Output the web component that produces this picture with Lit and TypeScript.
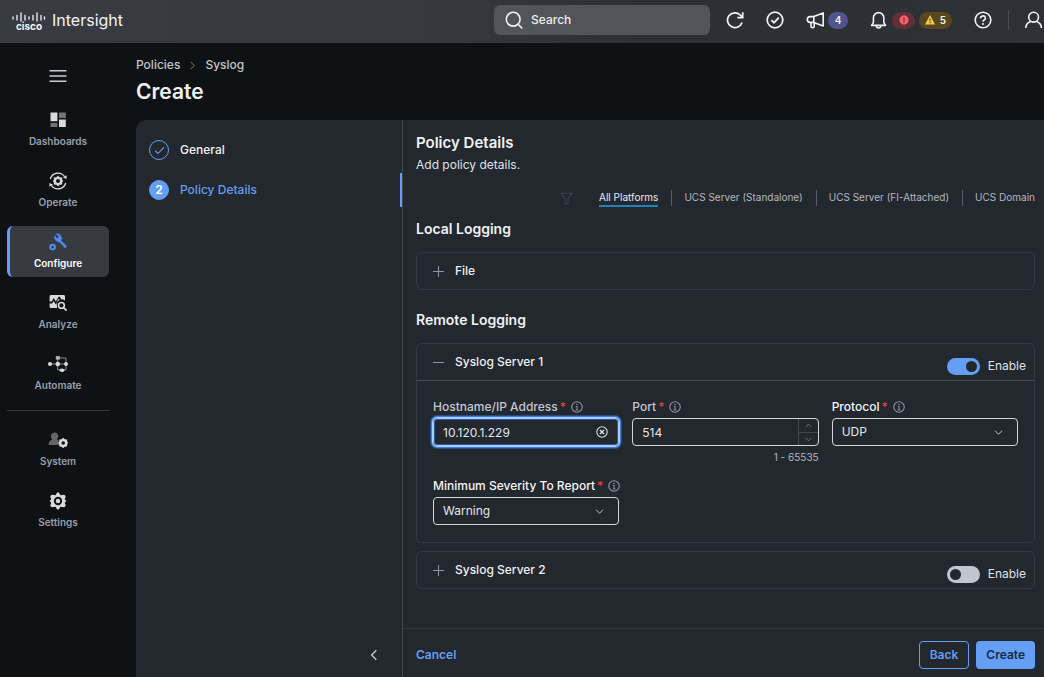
import { LitElement, html, svg, css, nothing } from "lit";
import { customElement, property, state } from "lit/decorators.js";
import { classMap } from "lit/directives/class-map.js";

const hexGear = svg`<path fill-rule="evenodd" d="M8 0Q8.6 0 8.9 .6L10.2 2.8 13.6 2.4Q14.8 2.8 15 4.1L14.1 6.4 15.6 8 14.1 9.6 15 11.9Q14.8 13.2 13.6 13.6L10.2 13.2 8.9 15.4Q8 16.2 7.1 15.4L5.8 13.2 2.4 13.6Q1.2 13.2 1 11.9L1.9 9.6 .4 8 1.9 6.4 1 4.1Q1.2 2.8 2.4 2.4L5.8 2.8 7.1 .6Q7.4 0 8 0ZM8 4.2A3.8 3.8 0 1 0 8 11.8 3.8 3.8 0 1 0 8 4.2Z"/><circle cx="8" cy="8" r="2"/>`;

const icons: Record<string, unknown> = {
  menu: svg`<path d="M.5 3.8h17M.5 9h17M.5 14.2h17" stroke="currentColor" stroke-width="1.5"/>`,
  search: svg`<g fill="none" stroke="currentColor" stroke-width="1.6" stroke-linecap="round"><circle cx="8.2" cy="8.2" r="6.9"/><path d="m13.2 13.2 3.6 3.8"/></g>`,
  refresh: svg`<g fill="none" stroke="currentColor" stroke-width="1.7"><path d="M16 11.4A7.4 7.4 0 1 1 14.2 4L16.3 6.2"/><path d="M16.7 1.2V6.6H11.4"/></g>`,
  check: svg`<g fill="none" stroke="currentColor" stroke-width="1.7"><circle cx="9" cy="9" r="7.8"/><path d="m5.4 9.2 2.6 2.5 4.8-5.1"/></g>`,
  megaphone: svg`<g fill="none" stroke="currentColor" stroke-width="1.6" stroke-linejoin="round"><path d="M7.8 5.6 17.2 1.9V14.9L7.8 11.4H4.2A2.9 2.9 0 0 1 4.2 5.6H7.8V11.4"/><path d="M5 11.6V15.2A1.6 1.6 0 0 0 8.2 15.2V11.8"/></g>`,
  bell: svg`<g fill="none" stroke="currentColor" stroke-width="1.6" stroke-linejoin="round"><path d="M3.4 11.6V6.8A5.2 5.2 0 0 1 13.8 6.8V11.6L15.6 14.4H1.6Z"/><path d="M6.4 14.8A2.2 2.2 0 0 0 10.8 14.8"/></g>`,
  alert: svg`<path fill-rule="evenodd" d="M6.2 1H11.8L17 5.6V12.4L11.8 17H6.2L1 12.4V5.6ZM7.9 4.4V10.2H10.1V4.4ZM7.9 11.6V13.8H10.1V11.6Z" fill="currentColor"/>`,
  warning: svg`<path fill-rule="evenodd" d="M9 0 18 17H0ZM8 6.4V11.4H10V6.4ZM8 12.8V14.8H10V12.8Z" fill="currentColor"/>`,
  help: svg`<g fill="none" stroke="currentColor" stroke-width="1.6"><circle cx="9" cy="9" r="7.8"/><path d="M6.6 7.4A2.4 2.2 0 1 1 9.8 9.2Q9 9.6 9 10.8"/></g><circle cx="9" cy="13" r="1" fill="currentColor"/>`,
  user: svg`<g fill="none" stroke="currentColor" stroke-width="1.6"><circle cx="8.6" cy="6.2" r="4.9"/><path d="M.8 17A8 7 0 0 1 5.6 10.6M16.4 17A8 7 0 0 0 11.6 10.6"/></g>`,
  dashboards: svg`<path d="M1.5 1.6H8.4V10.2H1.5ZM10 8.4H16.8V16H10Z" fill="currentColor"/><path d="M10 1.6H16.8V7H10ZM1.5 12H8.4V16H1.5Z" fill="currentColor" opacity=".5"/>`,
  operate: svg`<g fill="none" stroke="currentColor" stroke-width="1.3"><path d="M1.3 7A8 8 0 0 1 15.6 4.6M16.7 11A8 8 0 0 1 2.4 13.4"/></g><path d="M14 5.6 17.6 3.2 17.6 7ZM4 12.4.4 14.8.4 11Z" fill="currentColor"/><path fill-rule="evenodd" d="M9 3.6 10.6 5.2 13.2 5.4V8L14.4 9 13.2 10V12.6L10.6 12.8 9 14.4 7.4 12.8 4.8 12.6V10L3.6 9 4.8 8V5.4L7.4 5.2ZM9 7A2 2 0 1 0 9 11 2 2 0 1 0 9 7Z" fill="currentColor"/>`,
  configure: svg`<circle cx="3.6" cy="14.1" r="2.3" fill="none" stroke="currentColor" stroke-width="2"/><path d="M7.6 .8 10 3.6 9.2 5.6 7 5.2 5.8 3A4.6 4.6 0 0 0 10.4 8.8L16.2 14.8 17.6 13.4 11.8 7.6A4.6 4.6 0 0 0 7.6 .8Z" fill="currentColor" stroke="currentColor" stroke-width=".9" stroke-linejoin="round"/>`,
  analyze: svg`<path d="M2 1H14.6Q16 1 16 2.4V6.6A5 5 0 0 0 8 12V14H2Q.6 14 .6 12.4V9.4H3.2L4.6 7 6.8 10.6 9.4 4.6 10.6 6.2 12 5 11 2.8H9.6L6.8 7.6 4.8 4 2.6 7.4H.6V2.4Q.6 1 2 1Z" fill="currentColor"/><circle cx="12.4" cy="11.4" r="2.9" fill="none" stroke="currentColor" stroke-width="1.6"/><path d="m14.6 13.6 3 3" stroke="currentColor" stroke-width="1.7"/>`,
  automate: svg`<g fill="none" stroke="currentColor" stroke-width="1" opacity=".6"><path d="M1 9H18M9.6 3V14.8H18V3H9.6"/></g><g fill="currentColor"><circle cx="2" cy="9" r="2"/><circle cx="9.8" cy="9" r="2.3"/><circle cx="18" cy="9" r="2"/><ellipse cx="14" cy="15.2" rx="2.4" ry="1.8"/></g><rect x="7.8" y="1" width="4" height="3.6" fill="currentColor" opacity=".75"/>`,
  system: svg`<path d="M6.6 1.6A3.6 3.6 0 0 1 9 8Q9.2 9 10.6 9.6V14H.6V12.4Q1 9.8 3.2 9.2 4.2 8.8 4 7.8A3.6 3.6 0 0 1 6.6 1.6Z" fill="currentColor" opacity=".42"/><path fill-rule="evenodd" d="M15.2 6.8 16.8 8.2 19 8.6 19.2 10.6 20 12 19.2 13.4 19 15.4 16.8 15.8 15.2 17.2 13.6 15.8 11.4 15.4 11.2 13.4 10.2 12 11.2 10.6 11.4 8.6 13.6 8.2ZM15.2 10.2A1.8 1.8 0 1 0 15.2 13.8 1.8 1.8 0 1 0 15.2 10.2Z" fill="currentColor"/>`,
  settings: svg`<g transform="translate(.2 .2) scale(1.1)" fill="currentColor">${hexGear}</g>`,
  tick: svg`<path d="m3 9.4 4 3.8L15 4.8" fill="none" stroke="currentColor" stroke-width="1.6"/>`,
  filter: svg`<path d="M1.2 1.6H16.8L11 9V16.4H7V9Z" fill="none" stroke="currentColor" stroke-width="1.4" stroke-linejoin="round"/>`,
  plus: svg`<path d="M0 9H18M9 0V18" stroke="currentColor" stroke-width="1.7"/>`,
  minus: svg`<path d="M0 9H18" stroke="currentColor" stroke-width="1.7"/>`,
  info: svg`<circle cx="9" cy="9" r="7.9" fill="none" stroke="currentColor" stroke-width="1.6"/><path d="M9.1 8V13.4M7 13.4H11.2M7.2 8.2H9.6" fill="none" stroke="currentColor" stroke-width="1.4"/><circle cx="9" cy="5.2" r="1.1" fill="currentColor"/>`,
  clear: svg`<g fill="none" stroke="currentColor" stroke-width="1.6"><circle cx="9" cy="9" r="7.8"/><path d="m6 6 6 6M12 6l-6 6" stroke-width="2"/></g>`,
  down: svg`<path d="m2 5.5 7 7 7-7" fill="none" stroke="currentColor" stroke-width="2"/>`,
  up: svg`<path d="m2 12.5 7-7 7 7" fill="none" stroke="currentColor" stroke-width="2"/>`,
  left: svg`<path d="m12.5 2-7 7 7 7" fill="none" stroke="currentColor" stroke-width="2"/>`,
  right: svg`<path d="m5.5 2 7 7-7 7" fill="none" stroke="currentColor" stroke-width="2"/>`,
};

const icon = (name: string, size = 18, extra = "") => {
  const wide = name === "automate" || name === "system";
  return html`<svg class="icon ${extra}" width=${wide ? size + 2 : size} height=${size}
    viewBox=${wide ? "0 0 20 18" : "0 0 18 18"} aria-hidden="true">${icons[name]}</svg>`;
};

const base = css`
  * { box-sizing: border-box; }
  .icon { display: block; flex: none; }
  button, input, select { font: inherit; color: inherit; margin: 0; padding: 0; border: 0; background: none; }
  button, select { cursor: pointer; }
  a { color: inherit; text-decoration: none; }
`;

@customElement("top-bar")
class TopBar extends LitElement {
  static styles = [base, css`
    :host { display: block; }
    .bar { display: flex; align-items: center; justify-content: space-between; height: 43px; padding: 0 1px 3px 12px;
      background: linear-gradient(90deg, #383b42, #36393f 40%, #2c3035 62%, #2d3035); color: #f2f4f7; }
    .brand { display: flex; align-items: center; gap: 6px; }
    .mark { display: flex; flex-direction: column; align-items: center; }
    .word { font-size: 10px; line-height: 8px; font-weight: 700; }
    .product { font-size: 16px; line-height: 20px; }
    .tools { display: flex; align-items: center; gap: 16px; }
    .search { display: flex; align-items: center; gap: 8px; width: 216px; height: 30px; padding: 0 11px; border-radius: 6px; background: #515459; }
    .search input { flex: 1; min-width: 0; font-size: 12px; font-weight: 500; outline: 0; }
    .search input::placeholder { color: #eceef1; opacity: 1; }
    .actions { display: flex; align-items: center; gap: 22px; }
    .action { display: flex; align-items: center; gap: 4px; }
    .pill { display: flex; align-items: center; justify-content: center; gap: 5px; height: 17px; border-radius: 9px; font-size: 10px; font-weight: 600; }
    .news { width: 20px; background: #51568a; }
    .critical { width: 23px; background: #612f38; color: #ff5c6c; }
    .warn { width: 33px; background: #59481f; }
    .warn .amber { color: #f5c84c; }
    .rule { width: 1px; height: 20px; background: #484c52; }
  `];
  render() {
    const bars = [[1, 6, 2], [5, 4.5, 4.5], [9, 2, 8], [13, 4.5, 4.5], [17, 6, 2], [21, 4.5, 4.5], [25, 2, 8], [29, 4.5, 4.5], [32.5, 6, 2]];
    return html`<header class="bar">
      <a class="brand" href="#">
        <span class="mark">
          <svg width="34" height="11" viewBox="0 0 34 11" aria-hidden="true">
            ${bars.map(([x, y, h]) => svg`<path d="M${x} ${y}v${h}" stroke="currentColor" stroke-width="1.3" stroke-linecap="round"/>`)}
          </svg>
          <span class="word">cisco</span>
        </span>
        <span class="product">Intersight</span>
      </a>
      <div class="tools">
        <label class="search">${icon("search")}<input type="text" placeholder="Search" aria-label="Search" /></label>
        <div class="actions">
          <button class="action" aria-label="Refresh">${icon("refresh")}</button>
          <button class="action" aria-label="Requests">${icon("check")}</button>
          <button class="action" aria-label="Announcements">${icon("megaphone")}<span class="pill news">4</span></button>
          <button class="action" aria-label="Alarms">${icon("bell")}
            <span class="pill critical">${icon("alert", 10)}</span>
            <span class="pill warn">${icon("warning", 10, "amber")}5</span></button>
          <button class="action" aria-label="Help">${icon("help")}</button>
        </div>
        <span class="rule"></span>
        <button class="action" aria-label="Account">${icon("user")}</button>
      </div>
    </header>`;
  }
}

@customElement("side-nav")
class SideNav extends LitElement {
  static styles = [base, css`
    :host { display: block; }
    .nav { display: flex; flex-direction: column; gap: 10px; padding: 24px 7px 0; }
    .menu { display: flex; justify-content: center; height: 27px; color: #c9ccd2; }
    .item { display: flex; flex-direction: column; align-items: center; gap: 6px; height: 51px; padding-top: 7px;
      border-radius: 6px; font-size: 10px; line-height: 12px; font-weight: 600; color: #989eaa; }
    .item .icon { color: #d8dade; }
    .active { background: #373a40; color: #fff; border-left: 3px solid #649ef5; padding-right: 3px; }
    .active .icon { color: #4f8df0; }
    .rule { height: 1px; margin: 1px 0 3px; background: #34373c; }
  `];
  render() {
    const link = (name: string, label: string, active = false) => html`
      <a href="#" class=${classMap({ item: true, active })} aria-current=${active ? "page" : nothing}>
        ${icon(name)}<span>${label}</span></a>`;
    return html`<nav class="nav" aria-label="Main">
      <button class="menu" aria-label="Toggle navigation">${icon("menu")}</button>
      ${link("dashboards", "Dashboards")}${link("operate", "Operate")}${link("configure", "Configure", true)}
      ${link("analyze", "Analyze")}${link("automate", "Automate")}
      <div class="rule"></div>
      ${link("system", "System")}${link("settings", "Settings")}
    </nav>`;
  }
}

@customElement("log-section")
class LogSection extends LitElement {
  @property() heading = "";
  @property({ type: Boolean }) open = false;
  @property({ type: Boolean }) toggle = false;
  @property({ type: Boolean }) enabled = false;
  static styles = [base, css`
    :host { display: block; border: 1px solid #343840; border-radius: 6px; }
    .head { display: flex; align-items: center; justify-content: space-between; height: 36px; padding: 0 8px 0 16px; }
    .open { border-bottom: 1px solid #464a51; height: 37px; }
    .title { display: flex; align-items: center; gap: 11px; font-size: 12px; line-height: 16px; font-weight: 500; color: #eff1f4; }
    .title .icon { color: #9095a0; }
    .switch { display: flex; align-items: center; gap: 8px; padding-top: 8px; font-size: 12px; line-height: 16px; color: #dfe2e7; }
    .switch input { appearance: none; display: flex; align-items: center; width: 33px; height: 17px; padding: 0 3px; border-radius: 9px; background: #c1c5cd; }
    .switch input::before { content: ""; width: 11px; height: 11px; border-radius: 50%; background: #23272e; }
    .switch input:checked { justify-content: flex-end; background: #649ef5; }
  `];
  render() {
    return html`<div class=${classMap({ head: true, open: this.open })}>
        <button class="title" aria-expanded=${this.open} @click=${() => (this.open = !this.open)}>
          ${icon(this.open ? "minus" : "plus", 11)}<span>${this.heading}</span></button>
        ${this.toggle ? html`<label class="switch"><input type="checkbox" role="switch" .checked=${this.enabled} />Enable</label>` : nothing}
      </div>
      ${this.open ? html`<slot></slot>` : nothing}`;
  }
}

@customElement("app-root")
class AppRoot extends LitElement {
  @state() private host = "10.120.1.229";
  @state() private port = 514;
  static styles = [base, css`
    :host { display: grid; grid-template: auto 1fr / 116px minmax(0, 1fr); min-height: 100vh; background: #0f1215;
      color: #e3e6ea; font-family: Inter, "Liberation Sans", sans-serif; font-size: 12px; line-height: 16px; }
    top-bar { grid-column: 1 / -1; }
    .page { display: flex; flex-direction: column; padding: 14px 0 0 20px; }
    .crumbs { display: flex; align-items: center; gap: 8px; font-weight: 500; color: #c1c5cc; }
    .crumbs .icon { color: #7c8189; }
    h1, h2, h3, p { margin: 0; color: #eff1f4; font-weight: 600; }
    h1 { margin: 7px 0 16px; font-size: 21px; line-height: 24px; }
    .panel { flex: 1; display: grid; grid-template-columns: 267px minmax(0, 1fr); border-top-left-radius: 10px; background: #23272e; overflow: hidden; }
    .steps { display: flex; flex-direction: column; border-right: 1px solid #42464d; padding-top: 13px; }
    .step { display: flex; align-items: center; gap: 11px; height: 34px; margin-bottom: 6px; padding-left: 13px; font-weight: 500; color: #f1f3f5; }
    .current { color: #649ef5; border-right: 2px solid #649ef5; }
    .dot { display: flex; align-items: center; justify-content: center; width: 20px; height: 20px; border-radius: 50%; border: 1px solid #649ef5; color: #649ef5; }
    .current .dot { background: #649ef5; color: #fff; font-weight: 600; }
    .collapse { margin: auto 22px 16px auto; color: #c9ccd2; }
    .content { display: flex; flex-direction: column; }
    .body { flex: 1; padding: 12px 9px 34px 13px; }
    h2 { font-size: 15px; line-height: 22px; }
    h3 { font-size: 14px; line-height: 20px; }
    .intro { padding: 3px 0; font-weight: 400; color: #dfe2e7; }
    .tabs { display: flex; align-items: center; justify-content: flex-end; margin: 13px 0 12px; font-size: 10px; line-height: 16px; color: #b3b8c1; }
    .tabs .icon { color: #41454d; margin-right: 26px; }
    .tab { height: 18px; white-space: nowrap; border-bottom: 2px solid transparent; }
    .chosen { color: #e9ebee; border-color: #1f86bb; }
    .bar { width: 1px; height: 16px; margin: 0 12px 0 13px; background: #5a5f67; }
    .local { margin: 13px 0 20px; }
    .remote { margin: 13px 0 8px; }
    .form { display: grid; grid-template-columns: repeat(3, minmax(0, 1fr)); column-gap: 13px; row-gap: 14px; padding: 18px 16px 17px; }
    .caption { display: flex; align-items: center; height: 16px; margin-bottom: 3px; font-weight: 500; white-space: nowrap; color: #c3c7ce; }
    .strong { color: #f5f6f8; }
    .star { color: #e2414f; margin: 0 5px 0 2px; }
    .caption .icon { color: #9398a2; }
    .box { display: flex; align-items: center; height: 28px; border: 1px solid #d3d6dc; border-radius: 4px; padding-left: 9px; }
    .box input { flex: 1; min-width: 0; height: 26px; outline: 0; appearance: textfield; }
    .box input::-webkit-inner-spin-button { appearance: none; }
    .focus { border-color: #a9cdff; box-shadow: inset 0 0 0 1px #2b569c, 0 0 0 1px #a9cdff, 0 0 0 2px #3f7ddc, 0 0 0 3px #274a80; padding-right: 10px; }
    .stepper { display: grid; grid-template-rows: 1fr 1fr; width: 20px; height: 26px; border-left: 1px solid #42464d; color: #858a93; }
    .stepper button { display: grid; place-items: center; }
    .stepper button + button { border-top: 1px solid #42464d; }
    .pick { display: grid; grid-template-columns: 1fr auto; align-items: center; padding: 0; }
    .pick select { grid-area: 1 / 1 / 2 / 3; height: 26px; padding-left: 9px; appearance: none; outline: 0; }
    .pick option { background: #23272e; }
    .pick .icon { grid-area: 1 / 2; margin-right: 14px; color: #c1c5cc; pointer-events: none; }
    .hint { text-align: right; font-size: 10px; line-height: 14px; padding-top: 4px; color: #b3b8c1; height: 18px; }
    .footer { display: flex; align-items: center; gap: 7px; height: 49px; padding: 4px 9px 0 13px; border-top: 1px solid #34383f; color: #649ef5; font-weight: 600; }
    .cancel { margin-right: auto; }
    .btn { height: 28px; padding: 0 10px; border: 1px solid #649ef5; border-radius: 4px; }
    .primary { background: #649ef5; color: #192b48; border: 0; }
  `];

  private caption(id: string, text: string, strong = false) {
    return html`<label class=${classMap({ caption: true, strong })} for=${id}>${text}<span class="star">*</span>${icon("info", 12)}</label>`;
  }

  render() {
    return html`
      <top-bar></top-bar>
      <side-nav></side-nav>
      <main class="page">
        <nav class="crumbs" aria-label="Breadcrumb"><a href="#">Policies</a>${icon("right", 9)}<a href="#">Syslog</a></nav>
        <h1>Create</h1>
        <div class="panel">
          <div class="steps">
            <a class="step" href="#"><span class="dot">${icon("tick", 13)}</span>General</a>
            <a class="step current" href="#" aria-current="step"><span class="dot">2</span>Policy Details</a>
            <button class="collapse" aria-label="Collapse steps">${icon("left", 12)}</button>
          </div>
          <div class="content">
            <div class="body">
              <h2>Policy Details</h2>
              <p class="intro">Add policy details.</p>
              <div class="tabs">
                ${icon("filter", 13)}
                <button class="tab chosen">All Platforms</button><span class="bar"></span>
                <button class="tab">UCS Server (Standalone)</button><span class="bar"></span>
                <button class="tab">UCS Server (FI-Attached)</button><span class="bar"></span>
                <button class="tab">UCS Domain</button>
              </div>
              <h3>Local Logging</h3>
              <log-section class="local" heading="File"></log-section>
              <h3>Remote Logging</h3>
              <log-section class="remote" heading="Syslog Server 1" open toggle enabled>
                <div class="form">
                  <div>
                    ${this.caption("host", "Hostname/IP Address")}
                    <div class="box focus">
                      <input id="host" type="text" .value=${this.host} @input=${(e: Event) => (this.host = (e.target as HTMLInputElement).value)} />
                      <button aria-label="Clear" @click=${() => (this.host = "")}>${icon("clear", 12)}</button>
                    </div>
                  </div>
                  <div>
                    ${this.caption("port", "Port")}
                    <div class="box">
                      <input id="port" type="number" min="1" max="65535" .value=${String(this.port)} />
                      <span class="stepper">
                        <button aria-label="Increase" @click=${() => this.port++}>${icon("up", 7)}</button>
                        <button aria-label="Decrease" @click=${() => this.port--}>${icon("down", 7)}</button>
                      </span>
                    </div>
                    <div class="hint">1 - 65535</div>
                  </div>
                  <div>
                    ${this.caption("protocol", "Protocol", true)}
                    <div class="box pick"><select id="protocol"><option>UDP</option><option>TCP</option></select>${icon("down", 9)}</div>
                  </div>
                  <div>
                    ${this.caption("severity", "Minimum Severity To Report", true)}
                    <div class="box pick"><select id="severity"><option>Warning</option><option>Critical</option></select>${icon("down", 9)}</div>
                  </div>
                </div>
              </log-section>
              <log-section heading="Syslog Server 2" toggle></log-section>
            </div>
            <div class="footer">
              <button class="cancel">Cancel</button>
              <button class="btn">Back</button>
              <button class="btn primary">Create</button>
            </div>
          </div>
        </div>
      </main>`;
  }
}
